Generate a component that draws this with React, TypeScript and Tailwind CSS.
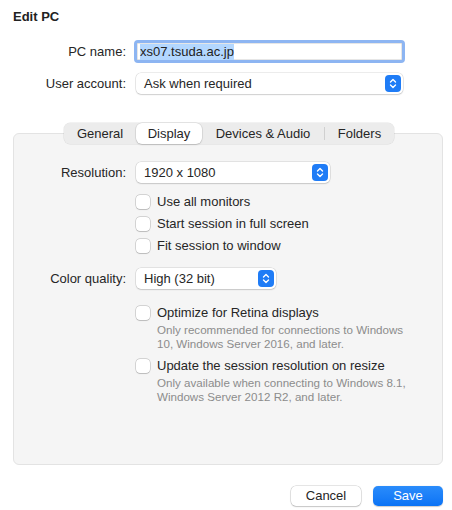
import React from 'react';

const Stepper: React.FC = () => (
  <span className="flex h-[17px] w-[16px] items-center justify-center rounded-[4px] bg-[#1f7cf6]">
    <svg width="8" height="11" viewBox="0 0 8 11" fill="none">
      <path d="M1.5 4 L4 1.5 L6.5 4" stroke="white" strokeWidth="1.4" strokeLinecap="round" strokeLinejoin="round" />
      <path d="M1.5 7 L4 9.5 L6.5 7" stroke="white" strokeWidth="1.4" strokeLinecap="round" strokeLinejoin="round" />
    </svg>
  </span>
);

const Popup: React.FC<{ value: string; width: string }> = ({ value, width }) => (
  <div
    className={`flex h-[21px] ${width} items-center justify-between rounded-[5px] bg-white pl-[8px] pr-[2px] shadow-[0_0_0_0.5px_rgba(0,0,0,0.15),0_1px_1.5px_rgba(0,0,0,0.12)]`}
  >
    <span className="text-[13px] text-[#262626]">{value}</span>
    <Stepper />
  </div>
);

const Checkbox: React.FC<{ label: string; note?: string[] }> = ({ label, note }) => (
  <div className="flex flex-col">
    <div className="flex h-[22px] items-center gap-[7px]">
      <span className="h-[14px] w-[14px] rounded-[4px] bg-white shadow-[0_0_0_0.5px_rgba(0,0,0,0.25),0_0.5px_1px_rgba(0,0,0,0.12)]" />
      <span className="text-[13px] text-[#262626]">{label}</span>
    </div>
    {note && (
      <div className="-mt-px pl-[21px] text-[11.6px] leading-[14px] text-[#8c8c8c]">
        {note.map((l) => (
          <div key={l}>{l}</div>
        ))}
      </div>
    )}
  </div>
);

const Row: React.FC<{ label: string; children: React.ReactNode; className?: string }> = ({ label, children, className = '' }) => (
  <div className={`flex items-center ${className}`}>
    <div className="w-[113px] shrink-0 text-right text-[13px] text-[#262626]">{label}</div>
    {children}
  </div>
);

const tabs = [
  { name: 'General', w: 'w-[72px]' },
  { name: 'Display', w: 'w-[66px]' },
  { name: 'Devices & Audio', w: 'w-[122px]' },
  { name: 'Folders', w: 'w-[69px]' },
];

export default function App() {
  return (
    <div
      className="flex h-[510px] w-[452px] flex-col bg-white pl-[13px] pr-[9px] text-[#262626]"
      style={{ fontFamily: '"Liberation Sans", Arial, sans-serif' }}
    >
      <div className="pt-[9px] text-[13px] font-bold leading-[16px] text-[#222]">Edit PC</div>

      <div className="mt-[15px] flex flex-col gap-[10px]">
        <Row label="PC name:">
          <div className="ml-[8px] flex h-[23px] w-[271px] items-center rounded-[4px] border-[3px] border-[#8db5f2]">
            <div className="flex h-full w-full items-center bg-white pl-[3px] shadow-[inset_0_0_0_0.5px_rgba(0,0,0,0.2)]">
              <span className="bg-[#b3d7ff] text-[13px] leading-[16px] text-[#222]">xs07.tsuda.ac.jp</span>
            </div>
          </div>
        </Row>
        <Row label="User account:">
          <div className="ml-[10px]">
            <Popup value="Ask when required" width="w-[267px]" />
          </div>
        </Row>
      </div>

      <div className="mt-[29px] flex flex-col">
        <div className="relative z-10 flex justify-center">
          <div className="ml-[2px] flex h-[21px] items-center rounded-[6px] bg-[#ececec] shadow-[0_0_0_0.5px_rgba(0,0,0,0.1)]">
            {tabs.map((t, i) => (
              <React.Fragment key={t.name}>
                {i === 3 && <span className="h-[13px] w-px bg-[#d0d0d0]" />}
                <div
                  className={`flex h-[21px] ${t.w} items-center justify-center text-[13px] text-[#262626] ${
                    t.name === 'Display'
                      ? 'rounded-[6px] bg-white shadow-[0_0_0_0.5px_rgba(0,0,0,0.12),0_1px_1.5px_rgba(0,0,0,0.15)]'
                      : ''
                  }`}
                >
                  {t.name}
                </div>
              </React.Fragment>
            ))}
          </div>
        </div>

        <div className="-mt-[11px] flex h-[332px] flex-col rounded-[6px] border border-[#e3e3e3] bg-[#f5f5f5] pt-[28px]">
          <Row label="Resolution:" className="-ml-px">
            <div className="ml-[10px]">
              <Popup value="1920 x 1080" width="w-[194px]" />
            </div>
          </Row>
          <div className="ml-[122px] mt-[8px] flex flex-col">
            <Checkbox label="Use all monitors" />
            <Checkbox label="Start session in full screen" />
            <Checkbox label="Fit session to window" />
          </div>
          <Row label="Color quality:" className="-ml-px mt-[11px]">
            <div className="ml-[10px]">
              <Popup value="High (32 bit)" width="w-[140px]" />
            </div>
          </Row>
          <div className="ml-[122px] mt-[13px] flex flex-col gap-[4px]">
            <Checkbox
              label="Optimize for Retina displays"
              note={['Only recommended for connections to Windows', '10, Windows Server 2016, and later.']}
            />
            <Checkbox
              label="Update the session resolution on resize"
              note={['Only available when connecting to Windows 8.1,', 'Windows Server 2012 R2, and later.']}
            />
          </div>
        </div>
      </div>

      <div className="mt-[21px] flex justify-end gap-[12px]">
        <button className="flex h-[20px] w-[70px] items-center justify-center rounded-[5px] bg-white text-[13px] text-[#262626] shadow-[0_0_0_0.5px_rgba(0,0,0,0.2),0_1px_1.5px_rgba(0,0,0,0.15)]">
          Cancel
        </button>
        <button className="flex h-[20px] w-[70px] items-center justify-center rounded-[5px] bg-gradient-to-b from-[#2a8cfb] to-[#0a73f5] text-[13px] text-white shadow-[0_0.5px_1px_rgba(0,0,0,0.2)]">
          Save
        </button>
      </div>
    </div>
  );
}
